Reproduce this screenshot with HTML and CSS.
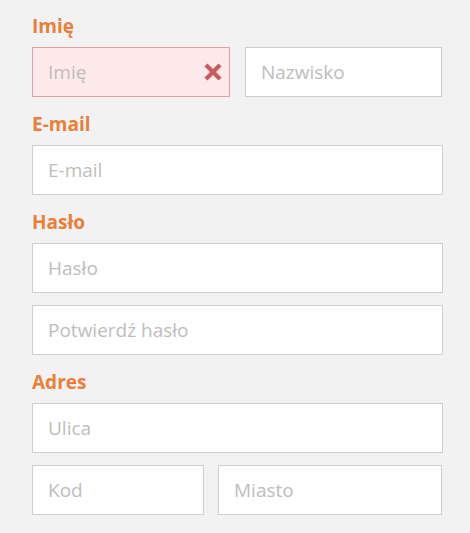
FILE: index.html
```html
<!DOCTYPE html>
<html lang="pl">
<head>
<meta charset="utf-8">
<link rel="stylesheet" href="styles.css">
</head>
<body>
<form class="form">
  <div class="group">
    <label class="label">Imię</label>
    <div class="row">
      <div class="field field-error">
        <input class="input" type="text" placeholder="Imię">
        <svg class="err-icon" viewBox="0 0 18 18" width="18" height="18"><path d="M2 2 L16 16 M16 2 L2 16" stroke="#c95a5d" stroke-width="4.2" stroke-linecap="butt"/></svg>
      </div>
      <div class="field">
        <input class="input" type="text" placeholder="Nazwisko">
      </div>
    </div>
  </div>
  <div class="group">
    <label class="label">E-mail</label>
    <div class="field"><input class="input" type="text" placeholder="E-mail"></div>
  </div>
  <div class="group">
    <label class="label">Hasło</label>
    <div class="field"><input class="input" type="password" placeholder="Hasło"></div>
    <div class="field"><input class="input" type="password" placeholder="Potwierdź hasło"></div>
  </div>
  <div class="group">
    <label class="label">Adres</label>
    <div class="field"><input class="input" type="text" placeholder="Ulica"></div>
    <div class="row row-addr">
      <div class="field"><input class="input" type="text" placeholder="Kod"></div>
      <div class="field"><input class="input" type="text" placeholder="Miasto"></div>
    </div>
  </div>
</form>
</body>
</html>
```
FILE: styles.css
```css
html, body {
  margin: 0;
  padding: 0;
  background: #f2f2f2;
}
body {
  font-family: "Open Sans", "Noto Sans", sans-serif;
}
.form {
  width: 411px;
  padding: 14px 0 0 32px;
  display: flex;
  flex-direction: column;
  gap: 15px;
}
.group {
  display: flex;
  flex-direction: column;
  gap: 12px;
}
.label {
  font-size: 19px;
  font-weight: 700;
  color: #e8803a;
  line-height: 24px;
  height: 21px;
}
.row {
  display: grid;
  grid-template-columns: 198px 197px;
  gap: 15px;
}
.row-addr {
  grid-template-columns: 172px 224px;
  gap: 14px;
}
.field {
  position: relative;
}
.input {
  box-sizing: border-box;
  display: block;
  width: 100%;
  height: 50px;
  margin: 0;
  padding: 0 15px;
  border: 1px solid #cfcfcf;
  background: #fff;
  font-family: "Open Sans", "Noto Sans", sans-serif;
  font-size: 19px;
  color: #555;
  outline: none;
  border-radius: 0;
}
.input::placeholder {
  color: #bdbdbd;
}
.field-error .input {
  background: #fde9e9;
  border-color: #e3a0a0;
}
.err-icon {
  position: absolute;
  right: 8px;
  top: 16px;
}
```
